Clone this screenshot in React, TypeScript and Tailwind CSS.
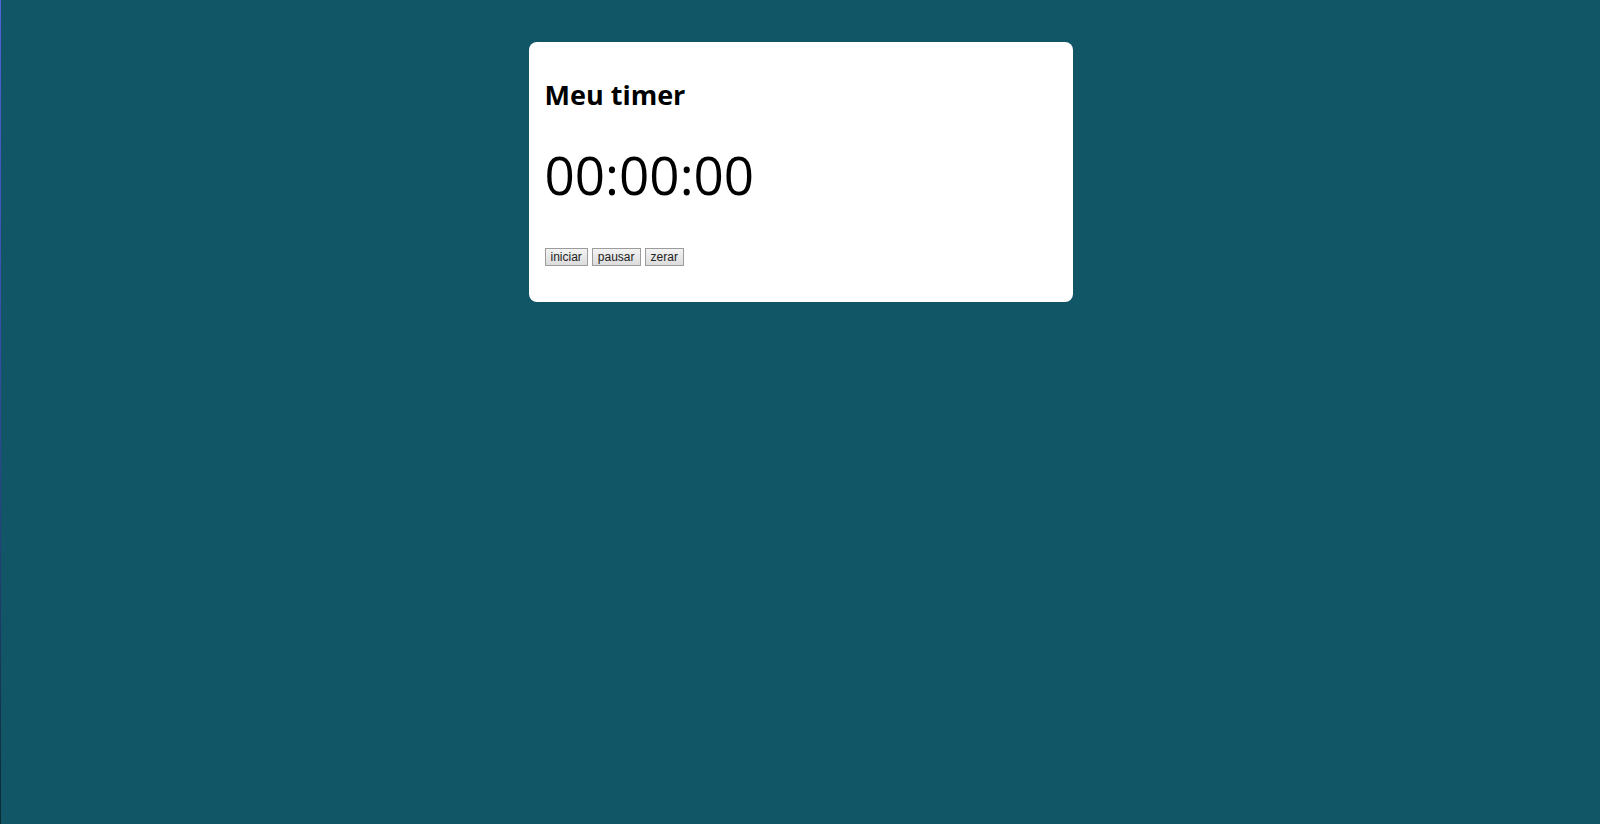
import { useState } from 'react'

const buttons = ['iniciar', 'pausar', 'zerar']

export default function App() {
  const [time] = useState('00:00:00')

  return (
    <div className="flex min-h-screen bg-[#115666] font-['Open_Sans',sans-serif]">
      <div className="w-px bg-linear-to-b from-[#5561d8] via-[#34489a] to-[#0c2a33]" />
      <div className="flex flex-1 justify-center pt-[42px]">
        <div className="h-fit w-[544px] rounded-lg bg-white p-4">
          <h1 className="mt-[18px] text-[27px] font-bold leading-[37px] text-black">
            Meu timer
          </h1>
          <div className="mt-[26px] text-[53px] leading-[72px] text-black">
            {time}
          </div>
          <div className="mb-[20px] mt-[37px] flex gap-[4px]">
            {buttons.map((label) => (
              <button
                key={label}
                className="h-[18px] border border-[#9c9c9c] bg-linear-to-b from-[#f3f3f3] to-[#dcdcdc] px-[5px] font-['Liberation_Sans',Arial,sans-serif] text-[12px] leading-[14px] text-[#222]"
              >
                {label}
              </button>
            ))}
          </div>
        </div>
      </div>
    </div>
  )
}
